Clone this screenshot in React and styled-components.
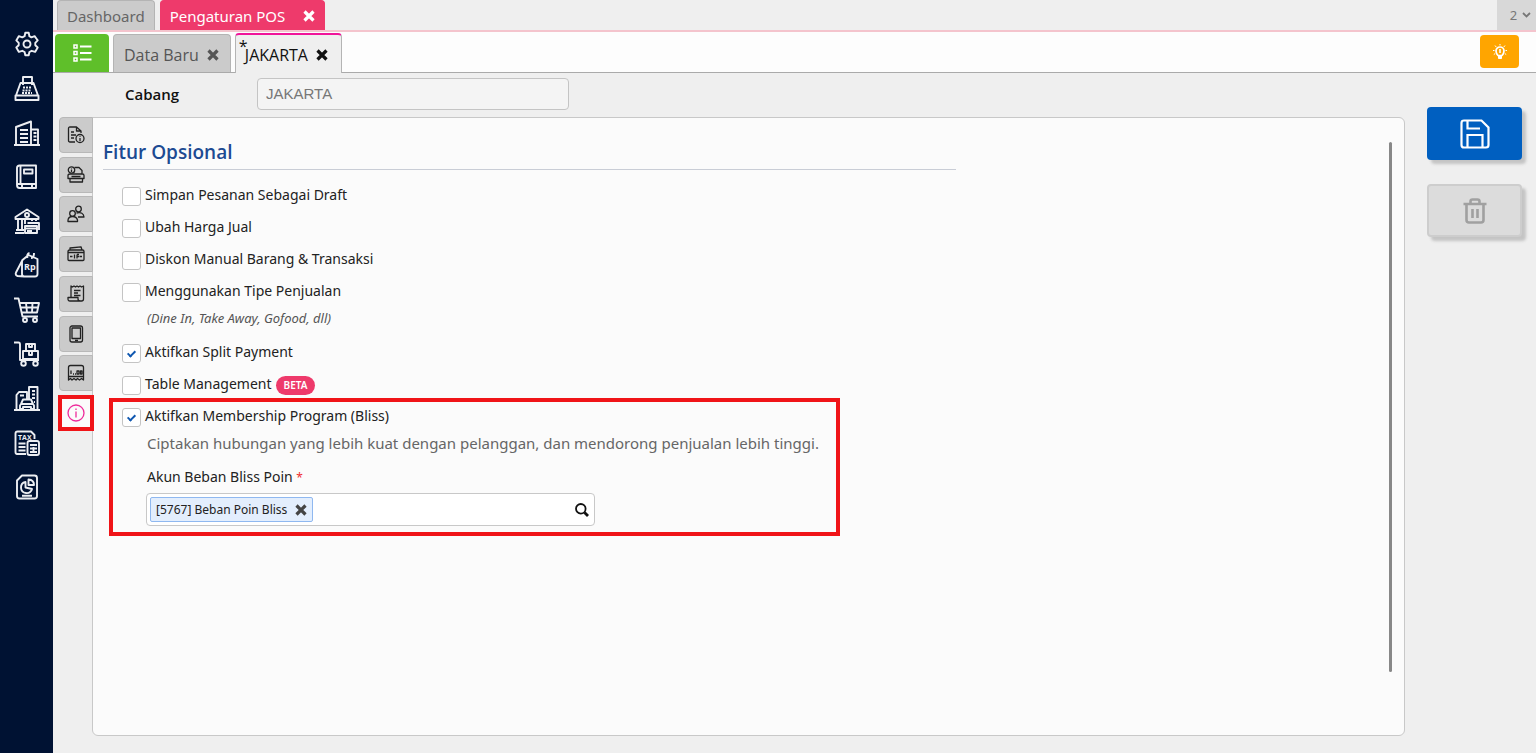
import React from 'react';
import styled, { createGlobalStyle } from 'styled-components';

const GearIcon = () => (
    <SideSvg viewBox="0 0 26 26">
        <path d="M10.6 5.2 11.3 1.8h3.4l.7 3.4 2 1.1 3.2-1.2 1.9 2.6 1.2 1.7-2.4 2.4v2.4l2.4 2.3-2.6 4.4-3.4-1.1-2.3 1.2-.7 3.3h-3.4l-.7-3.3-2.3-1.2-3.4 1.1-2.6-4.4 2.4-2.3v-2.4L2.3 9.4l2.6-4.3 3.4 1.2z" />
        <circle cx="13" cy="13" r="3.5" />
    </SideSvg>
)
const RegisterIcon = () => (
    <SideSvg viewBox="0 0 26 26">
        <path d="M9 10V2h9v8M6.5 8h13l4.500 12.500h-22zM1.500 20.500h23v4.500h-23z" />
        <path d="M9 12.500h8M8.500 15.500h9M8 18h10" strokeDasharray="2 1" />
    </SideSvg>
)
const BuildingIcon = () => (
    <SideSvg viewBox="0 0 26 26">
        <path d="M0 25h26M2 25V7l15-5.500V25M17 9.500h7V25" />
        <path d="M6 10h8M6 14h8M6 18h8M6 22h8M19.500 13h3M19.500 16.500h3M19.500 20h3" />
    </SideSvg>
)
const BookIcon = () => (
    <SideSvg viewBox="0 0 26 26">
        <path d="M5.500 1.500H22V24H5.500Q3 24 3 21V4q0-2.500 2.500-2.500zM6.500 2v18M3.500 20H22M10 5.500h8.500v4H10zM8 24v-3.500M18 24v-3.500" />
    </SideSvg>
)
const BankIcon = () => (
    <SideSvg viewBox="0 0 26 26">
        <path d="M1.500 9 13 1.500 24.500 9v2h-23zM4 11v11M8 11v11M11 11v5M18 11v2M22 11v2M2 22h8M1 25h9" />
        <circle cx="13" cy="7" r="2" />
        <path d="M11 18h12v7H11zM13.500 15H25v7M11 20.500h12M13 23h5" />
    </SideSvg>
)
const PriceTagIcon = () => (
    <SideSvg viewBox="0 0 26 26">
        <path d="m8.500 8 6-5 9 4v15q0 2.500-2.500 2.500H10.500Q8 24.500 8 22V9.500zM8.500 8 2 20.500q-1 2.500 1.500 3.500L10 24.500M13.500 6q-1-4.500 2-5M17 6q3 0 3-5" />
        <text x="10" y="18" fontSize="9" fontWeight="700" fontFamily="Open Sans, sans-serif" fill="#eceef2" stroke="none">Rp</text>
    </SideSvg>
)
const CartIcon = () => (
    <SideSvg viewBox="0 0 26 26">
        <path d="M0 1.500h4.500l4 18H24M6 6h19l-2 9.500H8M12 6l1 9.500M18.500 6 18 15.500M7 10.500h17" />
        <circle cx="11" cy="23" r="2" />
        <circle cx="21" cy="23" r="2" />
    </SideSvg>
)
const TrolleyIcon = () => (
    <SideSvg viewBox="0 0 26 26">
        <path d="M0 1.500h4.500q1.500 0 1.500 2V19h19M9 10h15v8H9zM12 3h9v7h-9zM15 3v3h3V3M15 10v4h3v-4" />
        <circle cx="9.500" cy="22.500" r="2.300" />
        <circle cx="21.500" cy="22.500" r="2.300" />
    </SideSvg>
)
const AssetIcon = () => (
    <SideSvg viewBox="0 0 26 26">
        <path d="M0 25h26M2.500 25V10L5 7h8v7M15 14V2h8.500v23M6 10.500h4M18 6h3M18 9.500h3M18 13h3M20 17h1" />
        <path d="m7 19 2-4.500h8l2 4.500 1 1.500V24h-3v-2H9v2H6v-3.500zM7 19h12" />
    </SideSvg>
)
const TaxIcon = () => (
    <SideSvg viewBox="0 0 26 26">
        <path d="M12 24H3q-1.500 0-1.500-2V3.500Q1.500 1.500 3.500 1.500H17L20.500 5v4M4.500 13.500h7M4.500 17h7M4.500 20.500h7" />
        <text x="4" y="10" fontSize="7" fontWeight="700" fontFamily="Open Sans, sans-serif" fill="#eceef2" stroke="none">TAX</text>
        <path d="M15.500 11H23q2 0 2 2v10q0 2-2 2h-7.500q-2 0-2-2V13q0-2 2-2zM16 15h7M16 18.500h7M16 22h7M19.500 17v6" />
    </SideSvg>
)
const ReportIcon = () => (
    <SideSvg viewBox="0 0 26 26">
        <path d="M8 1.500h12.500q2.500 0 2.500 2.500v18q0 2.500-2.500 2.500h-15Q3 24.500 3 22V6.500zM8 21.800h10" />
        <path d="M11.500 8a5.600 5.600 0 1 0 6.500 7L11.500 13.500zM14.500 5.500v5.500h5.500q0-5-5.500-5.500z" />
    </SideSvg>
)

const DocInfoIcon = () => (
    <TabSvg viewBox="0 0 18 18">
        <path d="M8 16H3q-1.500 0-1.500-1.500v-12Q1.500 1 3 1h6.500L14 5v2M9.500 1v4H14M4 6h3M4 9h5M4 12h3" />
        <circle cx="13" cy="12.500" r="4" />
        <path d="M13 12v3M13 10v.8" />
    </TabSvg>
)
const PrinterIcon = () => (
    <TabSvg viewBox="0 0 18 18">
        <circle cx="4.500" cy="4" r="3.200" />
        <path d="M4.500 3.500v2.500M4.500 2v.500M7.500 1.500H12l3 3v3M3.500 8h12q1.500 0 1.500 1.500v3H1v-3q0-1.500 2-1.500zM3 12.500v3.500h12.500v-3.500M4.500 10.500h9" />
    </TabSvg>
)
const UsersIcon = () => (
    <TabSvg viewBox="0 0 18 18">
        <circle cx="11.500" cy="4" r="2.800" />
        <circle cx="5.500" cy="8.500" r="2.800" />
        <path d="M1 16.500v-1.500q.5-3.500 4.500-3.500t5 3.500v1.500zM9.500 8Q16.500 6.500 17 12H11" />
    </TabSvg>
)
const DrawerIcon = () => (
    <TabSvg viewBox="0 0 18 18">
        <path d="M2.500 5h13q1.500 0 1.500 1.500v8q0 1-1 1H2q-1 0-1-1v-8Q1 5 2.500 5zM3 5V3L14 1.800l1 3.200M1.500 7.500h15M3 11.500h2.500M12.500 11.500H15M7.500 9.500v4M10 9.500v4M10 9.500h2M10 11.500h2" />
    </TabSvg>
)
const ReceiptIcon = () => (
    <TabSvg viewBox="0 0 18 18">
        <path d="M4 12.500V1l1.500 1L7 1l1.500 1L10 1l1.500 1L13 1l1.500 1L16.500 1v13q0 2-2 2H3q-2 0-2-2v-1.500h10V14q0 2 2.500 2M7 5.500h6.500M7 8h4M7 10.500h6.500" />
    </TabSvg>
)
const TabletIcon = () => (
    <TabSvg viewBox="0 0 18 18">
        <rect x="3" y="1" width="12.500" height="16" rx="2" />
        <path d="M5 3h8.500v10.500H5zM8 15.500h3" />
    </TabSvg>
)
const NumberIcon = () => (
    <TabSvg viewBox="0 0 18 18">
        <path d="M1.500 16V3.500Q1.500 1.500 3.500 1.500h11q2 0 2 2V16l-2-1.500-2 1.500-2-1.500L9 16l-2-1.500L5 16l-1.500-1.500zM1.500 12.500h15M4 6.500v3.500M6 10h1M8 10h1M10 7h2v3h-2zM13.500 7h1.500v3h-1.500z" />
    </TabSvg>
)
const InfoIcon = () => (
    <TabSvg viewBox="0 0 18 18">
        <circle cx="9" cy="9" r="8" />
        <path d="M9 7.500v6M9 4.500v1.500" />
    </TabSvg>
)

const CrossIcon = () => (
    <svg width="12" height="12" viewBox="0 0 12 12" fill="none" stroke="currentColor" strokeWidth="3.200">
        <path d="m1.500 1.500 9 9M10.500 1.500l-9 9" />
    </svg>
)
const ListIcon = () => (
    <svg width="19" height="18" viewBox="0 0 19 18" fill="none" stroke="#fff" strokeWidth="1.500">
        <path d="M1 1h3v3H1zM1 7.500h3v3H1zM1 14h3v3H1z" />
        <path d="M7 2.500h11.500M7 9h11.500M7 15.500h11.500" strokeWidth="2" />
    </svg>
)
const BulbIcon = () => (
    <svg width="14" height="16" viewBox="0 0 14 16" fill="none" stroke="#fff" strokeWidth="1">
        <path d="M5 11.500Q3 9.500 3 7a4 4 0 0 1 8 0q0 2.500-2 4.500z" strokeWidth="1.700" />
        <path d="M5.500 12h3v2.500h-3z" fill="#fff" />
        <path d="M7 5v4" strokeWidth="1.600" />
        <path d="M7 0v1.500M2 1.500l1.200 1.500M12 1.500 10.800 3M0 6.500h1.500M12.500 6.500H14M.800 10.500l1.200-.8M13.200 10.500l-1.200-.8" />
    </svg>
)
const SaveIcon = () => (
    <svg width="30" height="30" viewBox="0 0 30 30" fill="none" stroke="#fff" strokeWidth="2.200">
        <path d="M4 1.500h17.500l7 7V26q0 2.500-2.500 2.500H4Q1.500 28.500 1.500 26V4Q1.500 1.500 4 1.500zM7.500 2v7.500H20M7.500 28V16h15v12" />
    </svg>
)
const TrashIcon = () => (
    <svg width="24" height="26" viewBox="0 0 24 26" fill="none" stroke="#a0a0a0" strokeWidth="2.600">
        <path d="M.5 6h23M7.500 6V3.500Q7.500 1.500 9.500 1.500h5q2 0 2 2V6M3.500 6v16q0 2.500 2.500 2.500h12q2.500 0 2.500-2.500V6M9.500 11v9M14.500 11v9" />
    </svg>
)
const SearchIcon = () => (
    <svg width="14" height="14" viewBox="0 0 14 14" fill="none" stroke="#111">
        <circle cx="5.800" cy="5.800" r="4.800" strokeWidth="1.800" />
        <path d="m9.500 9.500 3.500 3.500" strokeWidth="2.800" />
    </svg>
)
const ChevronIcon = () => (
    <svg width="9" height="6" viewBox="0 0 9 6" fill="none" stroke="#777" strokeWidth="1.800">
        <path d="m1 1 3.500 3.500L8 1" />
    </svg>
)

const modules = [
    ['Pengaturan', GearIcon],
    ['Kasir', RegisterIcon],
    ['Perusahaan', BuildingIcon],
    ['Buku Besar', BookIcon],
    ['Kas Bank', BankIcon],
    ['Harga', PriceTagIcon],
    ['Pembelian', CartIcon],
    ['Persediaan', TrolleyIcon],
    ['Aset Tetap', AssetIcon],
    ['Pajak', TaxIcon],
    ['Laporan', ReportIcon],
]

const sections = [
    ['Informasi', DocInfoIcon],
    ['Printer', PrinterIcon],
    ['Pengguna', UsersIcon],
    ['Laci Kas', DrawerIcon],
    ['Struk', ReceiptIcon],
    ['Perangkat', TabletIcon],
    ['Penomoran', NumberIcon],
    ['Fitur Opsional', InfoIcon],
]

const Option = (props) => {
    return (
        <OptionLabel>
            <CheckBox type="checkbox" defaultChecked={props.checked} />
            <OptionText>{props.children}</OptionText>
            {props.badge && <Badge>{props.badge}</Badge>}
        </OptionLabel>
    )
}

const App = () => {
    return (
        <>
            <GlobalStyle />
            <Page>
                <Sidebar>
                    <ModuleList>
                        {modules.map(([name, Icon]) => (
                            <ModuleButton key={name} aria-label={name}><Icon /></ModuleButton>
                        ))}
                    </ModuleList>
                </Sidebar>
                <Main>
                    <TopTabs>
                        <TopTab>Dashboard</TopTab>
                        <TopTab $active>Pengaturan POS <CrossIcon /></TopTab>
                        <TabCount>2 <ChevronIcon /></TabCount>
                    </TopTabs>
                    <SubTabs>
                        <ListButton aria-label="Daftar"><ListIcon /></ListButton>
                        <SubTab>Data Baru <CrossIcon /></SubTab>
                        <SubTab $active><Unsaved>*</Unsaved>JAKARTA <CrossIcon /></SubTab>
                        <HintButton aria-label="Bantuan"><BulbIcon /></HintButton>
                    </SubTabs>
                    <Body>
                        <Form>
                            <BranchRow>
                                <BranchLabel htmlFor="cabang">Cabang</BranchLabel>
                                <BranchInput id="cabang" defaultValue="JAKARTA" />
                            </BranchRow>
                            <PanelRow>
                                <SectionTabs>
                                    {sections.map(([name, Icon], i) => (
                                        <SectionTab key={name} aria-label={name} $active={i === sections.length - 1}>
                                            <Icon />
                                        </SectionTab>
                                    ))}
                                </SectionTabs>
                                <Panel>
                                    <PanelContent>
                                        <Title>Fitur Opsional</Title>
                                        <Options>
                                            <Option>Simpan Pesanan Sebagai Draft</Option>
                                            <Option>Ubah Harga Jual</Option>
                                            <Option>Diskon Manual Barang &amp; Transaksi</Option>
                                            <Option>Menggunakan Tipe Penjualan</Option>
                                            <Note>(Dine In, Take Away, Gofood, dll)</Note>
                                            <Option checked>Aktifkan Split Payment</Option>
                                            <Option badge="BETA">Table Management</Option>
                                        </Options>
                                        <Highlight>
                                            <Option checked>Aktifkan Membership Program (Bliss)</Option>
                                            <Description>Ciptakan hubungan yang lebih kuat dengan pelanggan, dan mendorong penjualan lebih tinggi.</Description>
                                            <FieldLabel htmlFor="akun">Akun Beban Bliss Poin <Required>*</Required></FieldLabel>
                                            <Lookup>
                                                <Tag>[5767] Beban Poin Bliss <TagRemove aria-label="Hapus"><CrossIcon /></TagRemove></Tag>
                                                <LookupInput id="akun" />
                                                <SearchButton aria-label="Cari"><SearchIcon /></SearchButton>
                                            </Lookup>
                                        </Highlight>
                                    </PanelContent>
                                    <ScrollBar />
                                </Panel>
                            </PanelRow>
                        </Form>
                        <Actions>
                            <ActionButton $primary aria-label="Simpan"><SaveIcon /></ActionButton>
                            <ActionButton aria-label="Hapus"><TrashIcon /></ActionButton>
                        </Actions>
                    </Body>
                </Main>
            </Page>
        </>
    )
}

export default App

const GlobalStyle = createGlobalStyle`
* {
  box-sizing: border-box;
}
body {
  margin: 0;
  background: #efefef;
  color: #222;
  font-family: "Noto Sans", "Open Sans", sans-serif;
  font-size: 15px;
}
button, input {
  font: inherit;
  margin: 0;
}
button {
  border: 0;
  padding: 0;
  background: none;
  cursor: pointer;
}
svg {
  display: block;
  flex-shrink: 0;
}
`;

const Page = styled.div`
display: flex;
min-height: 100vh;
`;
const Sidebar = styled.aside`
width: 53px;
flex-shrink: 0;
background: #001233;
padding-top: 31px;
`;
const ModuleList = styled.nav`
height: 469px;
display: flex;
flex-direction: column;
align-items: center;
justify-content: space-between;
`;
const ModuleButton = styled.button`
width: 26px;
height: 26px;
`;
const SideSvg = styled.svg`
width: 26px;
height: 26px;
fill: none;
stroke: #eceef2;
stroke-width: 1.9;
stroke-linejoin: round;
`;
const TabSvg = styled.svg`
width: 18px;
height: 18px;
fill: none;
stroke: currentColor;
stroke-width: 1.3;
stroke-linejoin: round;
`;
const Main = styled.main`
flex: 1;
min-width: 0;
display: flex;
flex-direction: column;
`;
const TopTabs = styled.div`
height: 32px;
display: flex;
gap: 5px;
padding-left: 4px;
border-bottom: 2px solid #f4c4cd;
`;
const TopTab = styled.button`
display: flex;
align-items: center;
gap: 18px;
padding: 1px 9px 0;
line-height: 20px;
border: 1px solid ${props => props.$active ? '#ee3a6b' : '#b4b4b4'};
border-bottom: 0;
border-radius: 4px 4px 0 0;
background: ${props => props.$active ? '#ee3a6b' : '#cbcbcb'};
color: ${props => props.$active ? '#fff' : '#666'};
`;
const TabCount = styled.button`
margin-left: auto;
width: 39px;
padding-left: 8px;
display: flex;
align-items: center;
justify-content: center;
gap: 5px;
font-size: 13px;
color: #777;
background: #d8d8d8;
`;
const SubTabs = styled.div`
height: 41px;
display: flex;
align-items: flex-end;
padding-left: 2px;
background: #fdfdfd;
border-bottom: 1px solid #aaa;
`;
const ListButton = styled.button`
width: 54px;
height: 38px;
display: flex;
align-items: center;
justify-content: center;
border-radius: 4px 4px 0 0;
background: #5fbf2a;
`;
const SubTab = styled.button`
position: relative;
height: ${props => props.$active ? '40px' : '38px'};
margin: 0 0 ${props => props.$active ? '-1px' : '0'} 4px;
padding: ${props => props.$active ? '2px 13px 0 9px' : '2px 11px 0 10px'};
display: flex;
align-items: center;
gap: 8px;
font-family: "Open Sans", sans-serif;
font-size: 16px;
border: 1px solid #b4b4b4;
border-radius: 4px 4px 0 0;
border-top: ${props => props.$active ? '2px solid #f0149a' : '1px solid #b4b4b4'};
border-bottom-width: 0;
background: ${props => props.$active ? '#efefef' : '#cbcbcb'};
color: ${props => props.$active ? '#111' : '#555'};
`;
const Unsaved = styled.span`
position: absolute;
left: 3px;
top: 1px;
line-height: 20px;
`;
const HintButton = styled.button`
width: 39px;
height: 33px;
margin: 0 17px 4px auto;
display: flex;
align-items: center;
justify-content: center;
border-radius: 4px;
background: #ffa500;
`;
const Body = styled.div`
flex: 1;
display: flex;
padding-bottom: 17px;
`;
const Form = styled.div`
flex: 1;
min-width: 0;
display: flex;
flex-direction: column;
`;
const BranchRow = styled.div`
display: flex;
align-items: center;
padding: 5px 0 7px 72px;
`;
const BranchLabel = styled.label`
width: 132px;
font-family: "Open Sans", sans-serif;
font-weight: 600;
color: #111;
`;
const BranchInput = styled.input`
width: 312px;
height: 32px;
padding: 0 8px 2px;
border: 1px solid #c4c4c4;
border-radius: 4px;
background: #f4f4f4;
color: #777;
font-family: "Liberation Sans", Arial, sans-serif;
font-size: 15px;
`;
const PanelRow = styled.div`
flex: 1;
display: flex;
padding-left: 5px;
`;
const SectionTabs = styled.div`
width: 35px;
height: 314px;
display: flex;
flex-direction: column;
justify-content: space-between;
`;
const SectionTab = styled.button`
position: relative;
width: ${props => props.$active ? '36px' : '34px'};
height: 36px;
margin-left: ${props => props.$active ? '0' : '1px'};
display: flex;
align-items: center;
justify-content: center;
border: ${props => props.$active ? '4px solid #f01418' : '1px solid #b8b8b8'};
border-radius: ${props => props.$active ? '0' : '4px 0 0 4px'};
background: ${props => props.$active ? '#fbfbfb' : '#cbcbcb'};
color: ${props => props.$active ? '#ee2a9b' : '#222'};
`;
const Panel = styled.section`
flex: 1;
min-width: 0;
display: flex;
justify-content: space-between;
padding: 24px 12px 63px 10px;
margin-left: -1px;
border: 1px solid #c8c8c8;
border-radius: 0 6px 6px 6px;
background: #fbfbfb;
`;
const PanelContent = styled.div`
width: 853px;
`;
const ScrollBar = styled.div`
width: 3px;
border-radius: 2px;
background: #888;
`;
const Title = styled.h2`
margin: 0 0 10px;
height: 28px;
line-height: 20px;
font-family: "Open Sans", sans-serif;
font-size: 19px;
font-weight: 600;
color: #1d4a92;
border-bottom: 1px solid #c9cdd6;
`;
const Options = styled.div`
padding-left: 19px;
`;
const OptionLabel = styled.label`
display: flex;
align-items: center;
gap: 4px;
height: 32px;
line-height: 20px;
font-size: 14px;
`;
const OptionText = styled.span`
padding-bottom: 2px;
`;
const CheckBox = styled.input`
appearance: none;
width: 19px;
height: 19px;
border: 1px solid #c4c4c4;
border-radius: 3px;
background: #fff;

&:checked::after {
  content: '';
  display: block;
  width: 3px;
  height: 6px;
  margin: 4px 0 0 6px;
  border: solid #0f57b0;
  border-width: 0 2px 2px 0;
  transform: rotate(45deg);
}
`;
const Badge = styled.span`
padding: 0 8px;
line-height: 19px;
border-radius: 10px;
background: #ee3a6b;
color: #fff;
font-size: 10px;
font-weight: 600;
`;
const Note = styled.p`
margin: 0 0 9px 25px;
line-height: 20px;
font-size: 13px;
font-style: italic;
color: #555;
`;
const Highlight = styled.div`
width: 725px;
margin-left: 9px;
padding: 0 0 7px 10px;
outline: 4px solid #f01418;
outline-offset: -1px;
`;
const Description = styled.p`
margin: 0 0 14px 25px;
line-height: 20px;
white-space: nowrap;
color: #666;
`;
const FieldLabel = styled.label`
display: block;
margin: 0 0 5px 25px;
line-height: 20px;
font-size: 14px;
`;
const Required = styled.span`
font-size: 12px;
color: #f03030;
`;
const Lookup = styled.div`
width: 449px;
height: 33px;
margin-left: 24px;
padding: 3px 5px 3px 3px;
display: flex;
align-items: center;
border: 1px solid #c8c8c8;
border-radius: 4px;
background: #fff;
`;
const Tag = styled.span`
height: 25px;
padding: 0 5px;
display: flex;
align-items: center;
gap: 8px;
white-space: nowrap;
font-size: 12px;
border: 1px solid #8fb8f0;
border-radius: 2px;
background: #e3eefd;
`;
const TagRemove = styled.button`
color: #444;
`;
const LookupInput = styled.input`
flex: 1;
min-width: 0;
border: 0;
outline: 0;
background: none;
`;
const SearchButton = styled.button`
`;
const Actions = styled.div`
width: 131px;
padding: 34px 0 0 22px;
display: flex;
flex-direction: column;
gap: 24px;
`;
const ActionButton = styled.button`
width: 95px;
height: 53px;
display: flex;
align-items: center;
justify-content: center;
border: ${props => props.$primary ? '0' : '2px solid #cdcdcd'};
border-radius: 4px;
background: ${props => props.$primary ? '#005fc0' : '#dcdcdc'};
box-shadow: 4px 4px 3px #c4c4c4;
`;
